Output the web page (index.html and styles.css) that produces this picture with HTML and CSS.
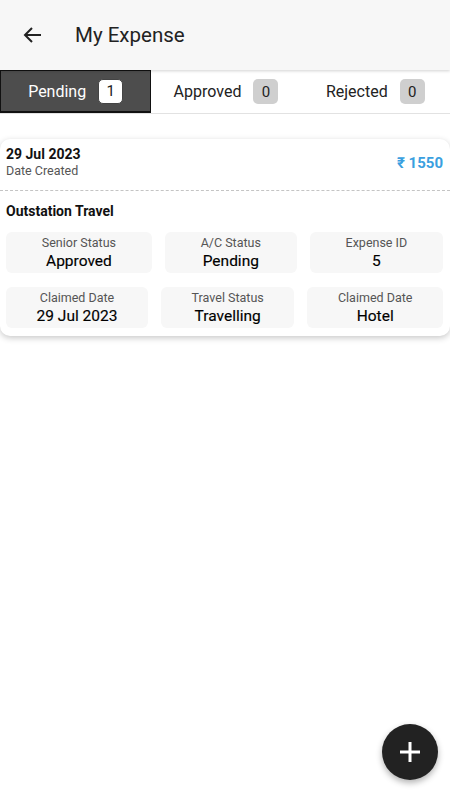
FILE: index.html
```html
<!DOCTYPE html>
<html>
<head>
<meta charset="utf-8">
<link rel="stylesheet" href="styles.css">
</head>
<body>
<div class="app">
  <header class="topbar">
    <svg class="back" width="24" height="24" viewBox="0 0 24 24"><path d="M20 12H4.5M11 5l-7 7 7 7" fill="none" stroke="#222" stroke-width="2"/></svg>
    <h1 class="title">My Expense</h1>
  </header>
  <nav class="tabs">
    <div class="tab active"><span>Pending</span><span class="badge">1</span></div>
    <div class="tab"><span>Approved</span><span class="badge">0</span></div>
    <div class="tab"><span>Rejected</span><span class="badge">0</span></div>
  </nav>
  <section class="card">
    <div class="card-head">
      <div>
        <div class="date">29 Jul 2023</div>
        <div class="sub">Date Created</div>
      </div>
      <div class="amount">₹ 1550</div>
    </div>
    <div class="card-body">
      <div class="type">Outstation Travel</div>
      <div class="row">
        <div class="cell"><div class="lbl">Senior Status</div><div class="val">Approved</div></div>
        <div class="cell"><div class="lbl">A/C Status</div><div class="val">Pending</div></div>
        <div class="cell"><div class="lbl">Expense ID</div><div class="val">5</div></div>
      </div>
      <div class="row">
        <div class="cell"><div class="lbl">Claimed Date</div><div class="val">29 Jul 2023</div></div>
        <div class="cell"><div class="lbl">Travel Status</div><div class="val">Travelling</div></div>
        <div class="cell"><div class="lbl">Claimed Date</div><div class="val">Hotel</div></div>
      </div>
    </div>
  </section>
  <button class="fab"><svg width="24" height="24" viewBox="0 0 24 24"><path d="M12 2v20M2 12h20" stroke="#fff" stroke-width="3"/></svg></button>
</div>
</body>
</html>
```
FILE: styles.css
```css
* { box-sizing: border-box; }
html, body { margin: 0; padding: 0; }
body { font-family: Roboto, "Noto Sans", sans-serif; background: #fff; color: #111; }
.app { position: relative; width: 450px; height: 800px; overflow: hidden; }
.topbar { height: 70px; background: #f7f7f7; display: flex; align-items: center; padding-left: 21px; box-shadow: 0 1px 3px rgba(0,0,0,0.18); position: relative; z-index: 2; }
.back { display: block; }
.title { margin: 0 0 0 30px; font-size: 20.5px; font-weight: 400; color: #222; }
.tabs { display: flex; height: 44px; border-bottom: 1px solid #e2e2e2; }
.tab { flex: 1; display: flex; align-items: center; justify-content: center; gap: 12px; font-size: 16px; color: #222; }
.tab.active { background: #4d4d4d; color: #fff; border: 1px solid #111; border-bottom-width: 2px; }
.badge { width: 25px; height: 25px; border-radius: 5px; background: #cfcfcf; color: #222; display: flex; align-items: center; justify-content: center; font-size: 15px; }
.tab.active .badge { background: #fff; color: #222; border: 1px solid #444; }
.card { margin-top: 25px; border-radius: 10px; background: #fff; box-shadow: 0 2px 6px rgba(0,0,0,0.22); }
.card-head { display: flex; justify-content: space-between; align-items: center; padding: 7px 7px 11px 6px; border-bottom: 1px dashed #c4c4c4; }
.date { font-size: 14px; font-weight: 700; line-height: 17px; }
.sub { font-size: 12.5px; color: #555; line-height: 16px; }
.amount { font-size: 15px; font-weight: 700; color: #3a9fe0; }
.card-body { padding: 12px 7px 8px 6px; }
.type { font-size: 14px; font-weight: 700; line-height: 17px; margin-bottom: 12px; }
.row { display: flex; gap: 13px; margin-bottom: 14px; }
.row:last-child { margin-bottom: 0; }
.cell { flex: 1 1 auto; background: #f7f7f7; border-radius: 6px; text-align: center; padding: 4px 6px 2px; }
.lbl { font-size: 12.5px; color: #555; line-height: 14px; }
.val { font-size: 15.5px; font-weight: 400; color: #000; line-height: 20px; margin-top: 1px; -webkit-text-stroke: 0.15px #000; }
.fab { position: absolute; left: 382px; top: 724px; width: 56px; height: 56px; border-radius: 50%; background: #222; border: none; display: flex; align-items: center; justify-content: center; box-shadow: 0 3px 6px rgba(0,0,0,0.3); padding: 0; }
```
